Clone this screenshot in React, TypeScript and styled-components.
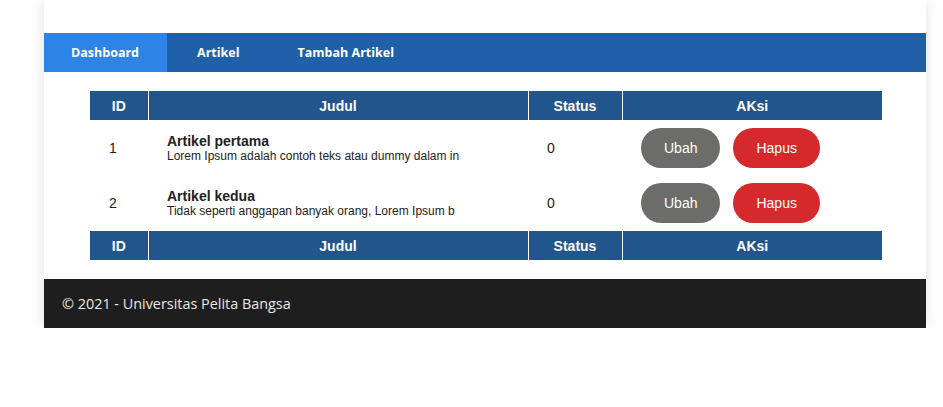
import React from "react";
import styled, { createGlobalStyle } from "styled-components";

const Global = createGlobalStyle`
  html, body { margin: 0; padding: 0; background: #fff; }
  body { font-family: "Liberation Sans", Arial, sans-serif; }
`;

const Container = styled.div`
  width: 882px;
  margin-left: 44px;
  background: #fff;
  box-shadow: 0 0 14px rgba(0, 0, 0, 0.12);
`;

const Header = styled.div`
  height: 33px;
`;

const Nav = styled.nav`
  display: flex;
  gap: 3px;
  height: 39px;
  background: #2060a9;
`;

const NavItem = styled.a<{ $active?: boolean }>`
  display: flex;
  align-items: center;
  padding: 0 28px 1px 27px;
  background: ${(p) => (p.$active ? "#2e83e6" : "transparent")};
  color: #fff;
  font-family: "Open Sans", sans-serif;
  font-weight: 700;
  font-size: 12.5px;
  text-decoration: none;
`;

const Main = styled.main`
  padding: 19px 44px 19px 46px;
`;

const Table = styled.table`
  width: 792px;
  table-layout: fixed;
  border-collapse: collapse;
  font-family: "Liberation Sans", Arial, sans-serif;
  font-size: 14px;
  color: #222;
`;

const Col = styled.col<{ $w: number }>`
  width: ${(p) => p.$w}px;
`;

const Th = styled.th`
  height: 29px;
  padding: 0;
  background: #22558c;
  color: #fff;
  font-weight: 700;
  font-size: 14px;
  text-align: center;
  border-left: 1px solid #fff;
  &:first-child { border-left: none; }
`;

const Td = styled.td`
  height: 55.5px;
  padding: 0 18px 0 19px;
  vertical-align: middle;
`;

const Title = styled.div`
  font-weight: 700;
  font-size: 14px;
  line-height: 15px;
  color: #222;
  margin-top: 1px;
`;

const Desc = styled.div`
  font-size: 12px;
  line-height: 14px;
  color: #222;
`;

const Actions = styled.div`
  display: flex;
  gap: 13px;
`;

const Btn = styled.button<{ $kind: "edit" | "del" }>`
  height: 40px;
  padding: 0 23px;
  border: none;
  border-radius: 20px;
  background: ${(p) => (p.$kind === "edit" ? "#6c6d6a" : "#d5292b")};
  color: #fff;
  font-family: "Liberation Sans", Arial, sans-serif;
  font-size: 14px;
  cursor: pointer;
`;

const Footer = styled.footer`
  height: 49px;
  display: flex;
  align-items: center;
  padding-left: 18px;
  background: #1e1e1e;
  color: #e8e8e8;
  font-family: "Open Sans", sans-serif;
  font-size: 14.4px;
`;

const rows = [
  { id: 1, title: "Artikel pertama", desc: "Lorem Ipsum adalah contoh teks atau dummy dalam in", status: 0 },
  { id: 2, title: "Artikel kedua", desc: "Tidak seperti anggapan banyak orang, Lorem Ipsum b", status: 0 },
];

const HeadRow = () => (
  <tr>
    <Th>ID</Th>
    <Th>Judul</Th>
    <Th>Status</Th>
    <Th>AKsi</Th>
  </tr>
);

export default function App() {
  return (
    <>
      <Global />
      <Container>
        <Header />
        <Nav>
          <NavItem $active href="#">Dashboard</NavItem>
          <NavItem href="#">Artikel</NavItem>
          <NavItem href="#">Tambah Artikel</NavItem>
        </Nav>
        <Main>
          <Table>
            <colgroup>
              <Col $w={58} />
              <Col $w={380} />
              <Col $w={94} />
              <Col $w={260} />
            </colgroup>
            <thead>
              <HeadRow />
            </thead>
            <tbody>
              {rows.map((r) => (
                <tr key={r.id}>
                  <Td>{r.id}</Td>
                  <Td>
                    <Title>{r.title}</Title>
                    <Desc>{r.desc}</Desc>
                  </Td>
                  <Td>{r.status}</Td>
                  <Td>
                    <Actions>
                      <Btn $kind="edit">Ubah</Btn>
                      <Btn $kind="del">Hapus</Btn>
                    </Actions>
                  </Td>
                </tr>
              ))}
            </tbody>
            <tfoot>
              <HeadRow />
            </tfoot>
          </Table>
        </Main>
        <Footer>© 2021 - Universitas Pelita Bangsa</Footer>
      </Container>
    </>
  );
}
